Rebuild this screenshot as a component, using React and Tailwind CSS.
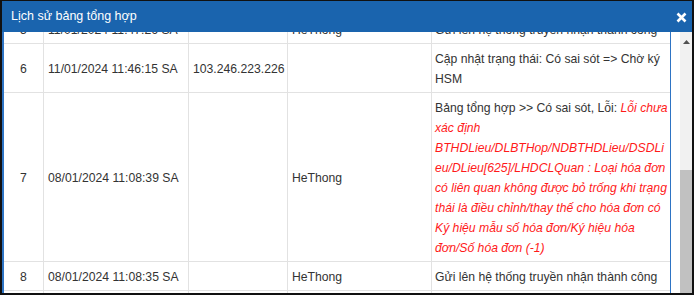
import React from "react";

const rows = [
  { n: "5", date: "11/01/2024 11:47:26 SA", ip: "", user: "HeThong", msg: <>Gửi lên hệ thống truyền nhận thành công</> },
  { n: "6", date: "11/01/2024 11:46:15 SA", ip: "103.246.223.226", user: "", msg: <>Cập nhật trạng thái: Có sai sót =&gt; Chờ ký HSM</> },
  {
    n: "7",
    date: "08/01/2024 11:08:39 SA",
    ip: "",
    user: "HeThong",
    msg: (
      <>
        Bảng tổng hợp &gt;&gt; Có sai sót, Lỗi:{" "}
        <i className="text-[#ff1a1a]">
          Lỗi chưa xác định BTHDLieu/DLBTHop/NDBTHDLieu/DSDLieu/DLieu[625]/LHDCLQuan : Loại hóa đơn có liên quan không được bỏ trống khi trạng thái là điều chỉnh/thay thế cho hóa đơn có Ký hiệu mẫu số hóa đơn/Ký hiệu hóa đơn/Số hóa đơn (-1)
        </i>
      </>
    ),
  },
  { n: "8", date: "08/01/2024 11:08:35 SA", ip: "", user: "HeThong", msg: <>Gửi lên hệ thống truyền nhận thành công</> },
  { n: "9", date: "08/01/2024 11:08:30 SA", ip: "", user: "HeThong", msg: <>Tạo mới</> },
];

export default function App() {
  return (
    <div
      className="w-[694px] h-[295px] bg-[#111] pt-[1px] px-[2px] pb-[2px] flex flex-col overflow-hidden"
      style={{ fontFamily: '"Liberation Sans", Arial, sans-serif' }}
    >
      <div className="h-[31px] shrink-0 bg-[#1a64ae] flex items-center justify-between pl-[9px] pr-[5px]">
        <span className="text-white text-[12.5px] leading-none">Lịch sử bảng tổng hợp</span>
        <svg width="11" height="11" viewBox="0 0 11 11" className="mt-[1px]">
          <path d="M1.5 1.5 L9.5 9.5 M9.5 1.5 L1.5 9.5" stroke="#fff" strokeWidth="2.6" strokeLinecap="butt" />
        </svg>
      </div>
      <div className="flex-1 flex bg-white border-l-2 border-[#2e74c4] overflow-hidden">
        <div className="w-[667px] shrink-0 border-r border-[#2e74c4] overflow-hidden">
          <div className="mt-[-17px] text-[12.2px] leading-[20px] text-[#333]">
            {rows.map((r) => (
              <div
                key={r.n}
                className="grid grid-cols-[40px_145px_99px_144px_238px] border-b border-[#e2e2e2]"
              >
                <div className="flex items-center justify-center pt-[5px] pb-[3px] border-r border-[#e2e2e2]">{r.n}</div>
                <div className="flex items-center pl-[4px] pr-[3px] pt-[5px] pb-[3px] border-r border-[#e2e2e2]">{r.date}</div>
                <div className="flex items-center pl-[4px] pr-[3px] pt-[5px] pb-[3px] border-r border-[#e2e2e2]">{r.ip}</div>
                <div className="flex items-center pl-[4px] pr-[3px] pt-[5px] pb-[3px] border-r border-[#e2e2e2]">{r.user}</div>
                <div className="pl-[3px] pr-[1px] pt-[5px] pb-[3px] break-words min-w-0">{r.msg}</div>
              </div>
            ))}
          </div>
        </div>
        <div className="w-[9px] shrink-0 bg-white" />
        <div className="w-[12px] shrink-0 bg-[#f1f1f1] flex flex-col items-center">
          <svg width="7" height="4" viewBox="0 0 7 4" className="mt-[8px]">
            <path d="M0 4 L3.5 0 L7 4 Z" fill="#505050" />
          </svg>
          <div className="mt-[126px] w-full flex-1 bg-[#c1c1c1]" />
        </div>
      </div>
    </div>
  );
}
